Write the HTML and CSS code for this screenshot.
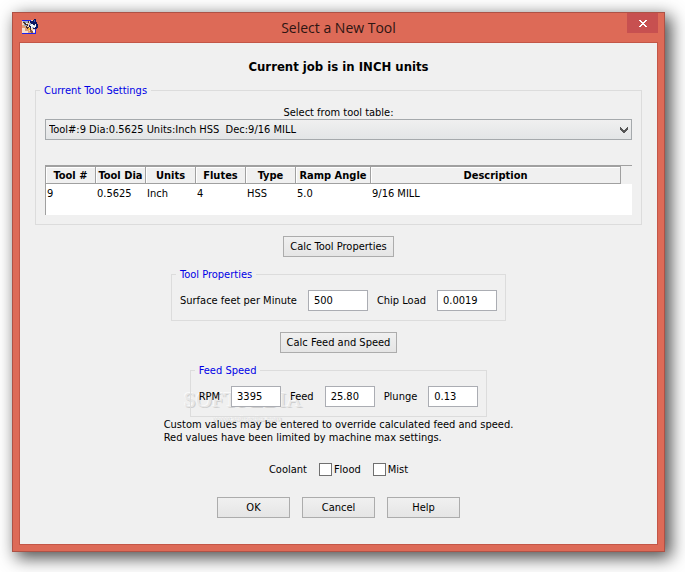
FILE: index.html
```html
<!DOCTYPE html>
<html lang="en">
<head>
<meta charset="utf-8">
<title>Select a New Tool</title>
<link rel="stylesheet" href="styles.css">
</head>
<body>
<div class="window">
  <header class="titlebar">
    <svg class="app-icon" viewBox="0 0 16 16" shape-rendering="crispEdges" aria-hidden="true">
      <path fill="#f2d3bd" d="M0 1h14v14H0z"/>
      <path fill="#dfa078" d="M0 6h4v3h3v3h3v3H0z"/>
      <path fill="#f4dfd2" d="M0 9h3v3h3v3H0z"/>
      <path fill="#8fa6c4" d="M1 2h6v2H1zM2 5h3v2H2z"/>
      <path fill="#1c22f0" d="M0 1h9v1H0zM0 14h14v1H0zM13 10h1v5h-1z"/>
      <path fill="#4b3028" d="M1 3h2v1h1v1h2v2H5V6H3V5H2V4H1zM6 2h1v2H6zM4 7h1v1h2v1h2v2H7v-1H5V9H4z"/>
      <path fill="#0b1560" d="M8 2h3V1h1V0h2v3h1v2h1v4h-1v1h-4V9H8V8H7V4h1z"/>
      <path fill="#f3f6f8" d="M8 5h3v1h2V5h1v3h-1v1H9V7H8z"/>
      <path fill="#9fb4c8" d="M7 4h2v2H7zM12 6h1v1h-1zM10 8h2v1h-2z"/>
      <path fill="#2f5cc4" d="M12 1h1v2h-1z"/>
      <path fill="#f2b632" d="M6 9h2v2H6z"/>
      <path fill="#8b5b40" d="M8 11h2v1h1v2H9v-1H8z"/>
      <path fill="#fff" d="M4 4h1v1H4zM11 11h2v2h-2z"/>
    </svg>
    <h1 class="title">Select a New Tool</h1>
    <button class="close" type="button" aria-label="Close">
      <svg viewBox="0 0 8 7" shape-rendering="crispEdges" aria-hidden="true"><path fill="#fff" d="M0 0h2v1h1v1h2V1h1V0h2v1H7v1H6v1H5v1h1v1h1v1h1v1H6V6H5V5H3v1H2v1H0V6h1V5h1V4h1V3H2V2H1V1H0z"/></svg>
    </button>
  </header>
  <form class="client">
    <h2 class="job">Current job is in INCH units</h2>

    <fieldset class="group settings">
      <legend>Current Tool Settings</legend>
      <label class="select-label" for="tool">Select from tool table:</label>
      <div class="combo">
        <select id="tool"><option>Tool#:9 Dia:0.5625 Units:Inch HSS&nbsp; Dec:9/16 MILL</option></select>
        <svg class="chevron" viewBox="0 0 8 6" shape-rendering="crispEdges" aria-hidden="true"><path fill="#555" d="M0 0h1v1h1v1h1v1h2V2h1V1h1V0h1v3H7v1H6v1H5v1H3V5H2V4H1V3H0z"/></svg>
      </div>
      <div class="table-wrap">
        <table>
          <colgroup><col class="narrow"><col class="narrow"><col class="narrow"><col class="narrow"><col class="narrow"><col class="medium"><col><col class="corner"></colgroup>
          <thead><tr><th>Tool #</th><th>Tool Dia</th><th>Units</th><th>Flutes</th><th>Type</th><th>Ramp Angle</th><th>Description</th><td></td></tr></thead>
          <tbody><tr><td>9</td><td>0.5625</td><td>Inch</td><td>4</td><td>HSS</td><td>5.0</td><td>9/16 MILL</td><td></td></tr></tbody>
        </table>
      </div>
    </fieldset>

    <button class="btn calc" type="button">Calc Tool Properties</button>

    <fieldset class="group fields">
      <legend>Tool Properties</legend>
      <div class="row">
        <label for="sfm">Surface feet per Minute</label><input class="wide" id="sfm" type="text" value="500">
        <label for="chip">Chip Load</label><input class="wide" id="chip" type="text" value="0.0019">
      </div>
    </fieldset>

    <button class="btn calc" type="button">Calc Feed and Speed</button>

    <div class="feed">
      <div class="watermark">SOFTPEDIA<sup>™</sup><small>www.softpedia.com</small></div>
      <fieldset class="group fields">
        <legend>Feed Speed</legend>
        <div class="row">
          <label for="rpm">RPM</label><input id="rpm" type="text" value="3395">
          <label for="feedrate">Feed</label><input id="feedrate" type="text" value="25.80">
          <label for="plunge">Plunge</label><input id="plunge" type="text" value="0.13">
        </div>
      </fieldset>
      <p class="note">Custom values may be entered to override calculated feed and speed.<br>Red values have been limited by machine max settings.</p>
    </div>

    <div class="coolant">
      <span>Coolant</span>
      <label><input type="checkbox">Flood</label>
      <label><input type="checkbox">Mist</label>
    </div>

    <div class="actions">
      <button class="btn" type="button">OK</button>
      <button class="btn" type="button">Cancel</button>
      <button class="btn" type="button">Help</button>
    </div>
  </form>
</div>
</body>
</html>
```
FILE: styles.css
```css
* { box-sizing: border-box; }

body {
  margin: 0;
  padding: 12px 20px 20px 12px;
  background: #fff;
  color: #000;
  font: 11px/13px "DejaVu Sans Condensed", "Noto Sans", sans-serif;
}

input, select, button { font: inherit; color: inherit; border-radius: 0; }

.window {
  padding: 0 6px 6px;
  border: 1px solid #ad5246;
  background: #dd6a57;
  box-shadow: 5px 5px 16px 1px rgba(0, 0, 0, 0.7);
}

.titlebar {
  display: flex;
  align-items: flex-start;
  height: 29px;
}

.app-icon { width: 16px; height: 16px; margin: 6px 0 0 3px; }

.title {
  flex: 1;
  margin: 5px 0 0 12px;
  color: #2d1512;
  font: 14px/20px "Open Sans", sans-serif;
  text-align: center;
}

.close {
  display: grid;
  place-items: center;
  width: 31px;
  height: 20px;
  padding: 0;
  border: 0;
  background: #c75050;
}

.close svg { width: 8px; height: 7px; }

.client {
  display: flex;
  flex-direction: column;
  align-items: center;
  padding: 16px 15px 26px;
  border: 1px solid #c35647;
  background: #f0f0f0;
}

.job { margin: 0 0 9px; font-size: 13px; line-height: 16px; }

.group {
  min-width: 0;
  margin: 0;
  border: 1px solid #dcdcdc;
}

legend { margin: 0; padding: 0 4px; color: #0000e6; line-height: 13px; }

.settings { align-self: stretch; padding: 9px 9px; }
.settings legend { margin-left: -5px; }

.select-label { display: block; text-align: center; }

.combo { position: relative; }

select {
  display: block;
  width: 100%;
  height: 21px;
  padding: 0 3px;
  border: 1px solid #a5a9ac;
  background: linear-gradient(#f0f0f0, #e3e5e6);
  appearance: none;
}

.chevron {
  position: absolute;
  top: 8px;
  right: 4px;
  width: 8px;
  height: 6px;
  pointer-events: none;
}

.table-wrap {
  min-height: 50px;
  margin-top: 25px;
  border-top: 1px solid #a0a0a0;
  border-left: 1px solid #a0a0a0;
  background: #fff;
}

table { width: 100%; border-collapse: separate; border-spacing: 0; table-layout: fixed; }
.narrow { width: 50px; }
.medium { width: 75px; }
.corner { width: 11px; }

th, thead td { height: 18px; padding: 0; background: #f0f0f0; }
th {
  border: solid #a0a0a0;
  border-width: 1px 1px 1px 0;
  box-shadow: inset 1px 1px #fff;
  white-space: nowrap;
}

tbody td { height: 18px; padding: 0 1px; white-space: nowrap; }

.btn {
  width: 73px;
  height: 21px;
  padding: 0;
  border: 1px solid #acacac;
  background: linear-gradient(#f0f0f0, #e5e5e5);
}

.calc { width: auto; margin: 11px 0; padding: 0 6px; }

.fields { padding: 9px 8px; }
.fields legend { margin-left: -4px; }

.row { display: flex; align-items: center; }
.row input { width: 50px; height: 21px; margin: 0 9px 0 11px; padding: 0 5px; border: 1px solid #abadb3; background: #fff; }
.row input.wide { width: 60px; }
.row input:last-child { margin-right: 0; }

.feed {
  position: relative;
  z-index: 0;
  display: flex;
  flex-direction: column;
  align-items: center;
}

.note { margin: 1px 0 0; }

.watermark {
  position: absolute;
  z-index: -1;
  top: 22px;
  left: 20px;
  color: #e8e8e8;
  font: 22px/28px "Liberation Serif", serif;
  text-shadow: -1px -1px #fafafa, 1px 1px #cfcfcf;
  pointer-events: none;
}

.watermark sup { font-size: 8px; line-height: 8px; }
.watermark small { display: block; font: 8px/10px "Liberation Sans", sans-serif; text-align: center; }

.coolant { display: flex; gap: 12px; align-items: center; margin-top: 19px; }
.coolant label { display: flex; gap: 2px; align-items: center; }
.coolant input {
  width: 13px;
  height: 13px;
  margin: 0;
  border: 1px solid #707070;
  background: #fff;
  appearance: none;
}

.actions { display: flex; gap: 12px; margin-top: 21px; }
```
